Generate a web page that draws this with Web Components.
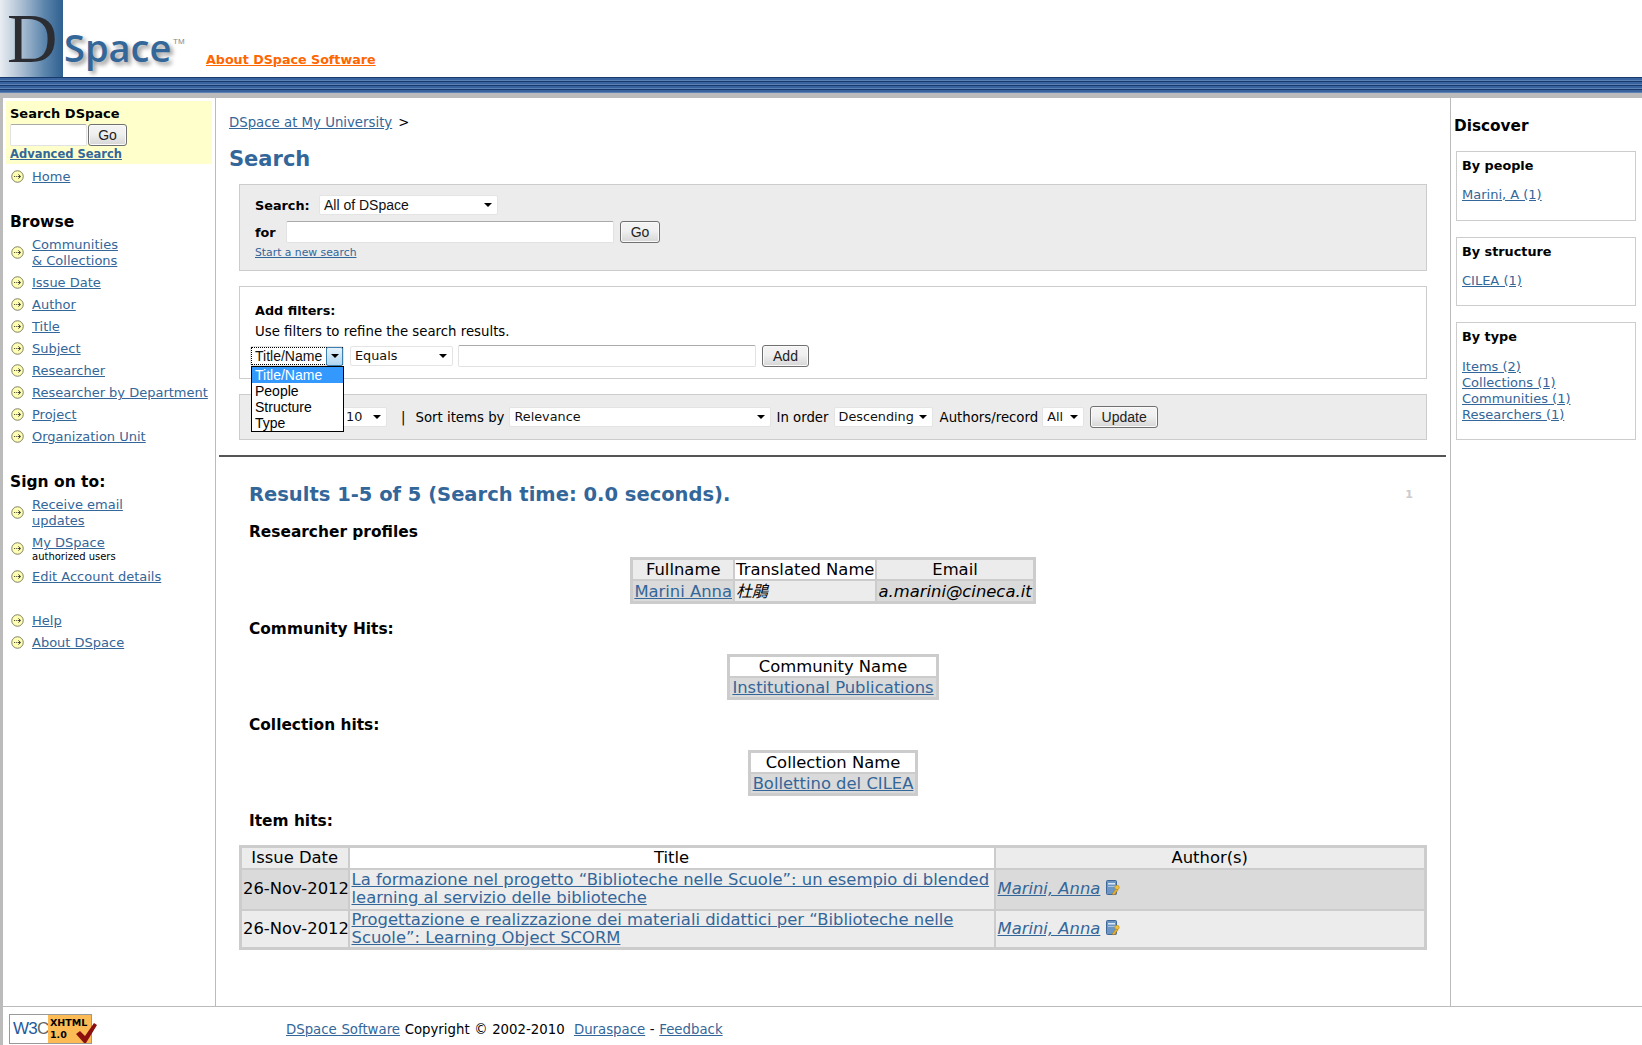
<!DOCTYPE html>
<html lang="en"><head><meta charset="utf-8"><title>DSpace Search</title>
<style>
html,body{margin:0;padding:0;background:#fff}
body{font-family:"DejaVu Sans",Verdana,sans-serif;font-size:13px;color:#000;overflow:hidden;height:1045px}
</style></head><body>
<ds-page>
  <ds-header slot="header"></ds-header>
  <ds-sidebar slot="left"></ds-sidebar>
  <ds-main slot="main"></ds-main>
  <ds-discover slot="right"></ds-discover>
  <ds-footer slot="footer"></ds-footer>
</ds-page>
<script>
const LINK='#336699';
const linkCss=`a{color:${LINK};text-decoration:underline}`;
function def(name,css,html){
  customElements.define(name,class extends HTMLElement{
    constructor(){super();const s=this.attachShadow({mode:'open'});
      s.innerHTML=`<style>${css}</style>${typeof html==='function'?html(this):html}`;}
  });
}
def('ds-page',`:host{display:flex;flex-direction:column;height:1045px;overflow:hidden}
.body{display:flex;height:908px;border-left:3px solid #bbb;flex:none}
::slotted([slot=left]){width:213px;flex:none;border-right:1px solid #bbb}
::slotted([slot=main]){flex:1;min-width:0}
::slotted([slot=right]){width:192px;flex:none;border-left:1px solid #bbb}`,
`<slot name="header"></slot><div class="body"><slot name="left"></slot><slot name="main"></slot><slot name="right"></slot></div><slot name="footer"></slot>`);

def('ds-header',`:host{display:block}
.top{height:77px;display:flex;align-items:flex-end;position:relative}
.logo{width:63px;height:77px;flex:none;background:linear-gradient(90deg,#e9edf2 0%,#a9bdd2 35%,#5d86ad 70%,#2f6090 100%);position:relative}
.d{position:absolute;left:7px;top:4px;font:70px/70px "Liberation Serif",serif;color:#2b2d33}
.space{flex:none;width:110px;box-sizing:border-box;padding-left:1px;font:600 38px/48px "Open Sans",sans-serif;color:#336699;text-shadow:3px 3px 4px #9a9a9a;margin-bottom:6px;white-space:nowrap}
.tm{flex:none;font:8px/10px "Liberation Sans",sans-serif;color:#888;align-self:flex-start;margin-top:37px;width:24px}
a{font:bold 12.7px/16px "DejaVu Sans",sans-serif;color:#ff6600;margin-left:9px;margin-bottom:9px;text-decoration:underline}
.st{height:16px;background:repeating-linear-gradient(180deg,#17396b 0 1px,#39639f 1px 3px,#5b82b5 3px 4px)}
.gr{height:5px;background:#bbb}`,
`<div class="top"><div class="logo"><span class="d">D</span></div><span class="space">Space</span><span class="tm">TM</span><a href="#">About DSpace Software</a></div><div class="st"></div><div class="gr"></div>`);

def('ds-btn',`:host{display:inline-block;box-sizing:border-box;height:22px;padding:0 9px;border:1px solid #707070;border-radius:3px;background:linear-gradient(#f4f4f4,#f0f0f0 45%,#d6d6d6);font:14px/20px "Liberation Sans",sans-serif;color:#222;text-align:center;box-shadow:inset 0 0 0 1px #fafafa;flex:none}`,`<slot></slot>`);
def('ds-input',`:host{display:inline-block;box-sizing:border-box;height:22px;background:#fff;border:1px solid #e2e2e2;border-top-color:#aaa;border-radius:2px;flex:none}`,``);
def('ds-sel',`:host{display:inline-flex;align-items:center;box-sizing:border-box;height:20px;background:#fff;border:1px solid #e4e4e4;border-radius:2px;padding:0 4px;font:14px/18px "Liberation Sans",sans-serif;color:#111;justify-content:space-between;flex:none}
:host([v]){font-family:"DejaVu Sans",sans-serif;font-size:12.8px}
:host([plain]) i{display:none}
i{width:0;height:0;border:4px solid transparent;border-top:4px solid #000;border-bottom:0;margin-right:1px}`,`<span><slot></slot></span><i></i>`);

const bullet=`<svg width="13" height="13" viewBox="0 0 14 14"><circle cx="7" cy="7" r="6.2" fill="#ffffb4" stroke="#77775a"/><path d="M3.2 7h1M5.2 7h1M7.2 7h2.5" stroke="#333"/><path d="M8 4.8 10.4 7 8 9.2" fill="none" stroke="#333"/></svg>`;
def('ds-nav',`:host{display:flex;align-items:center;gap:8px;padding:3px 0 3px 5px;line-height:16px;font-size:13px}
svg{flex:none;margin-top:-1px}
.c{display:block;min-width:0}
::slotted(a){color:${LINK}}`,`${bullet}<span class="c"><slot></slot></span>`);

def('ds-sidebar',`:host{display:block;box-sizing:border-box;padding:3px 3px 0}
${linkCss}
.sb{background:#ffffcc;height:63px;padding:5px 4px 0;box-sizing:border-box}
.t{font:bold 13px/16px "DejaVu Sans",sans-serif;color:#000}
.r{display:flex;gap:1px;height:22px;margin-top:2px}
.r ds-input{width:77px}.r ds-btn{width:39px;padding:0}
.adv{display:block;font:bold 11.5px/14px "DejaVu Sans",sans-serif;margin-top:1px}
h2{font:bold 15.5px/20px "DejaVu Sans",sans-serif;margin:0 0 2px 4px;color:#000}`,
`<div class="sb"><div class="t">Search DSpace</div><div class="r"><ds-input></ds-input><ds-btn>Go</ds-btn></div><a class="adv" href="#">Advanced Search</a></div>
<ds-nav style="margin-top:2px"><a href="#">Home</a></ds-nav>
<h2 style="margin-top:24px">Browse</h2>
<ds-nav><a href="#">Communities<br>&amp; Collections</a></ds-nav>
<ds-nav><a href="#">Issue Date</a></ds-nav>
<ds-nav><a href="#">Author</a></ds-nav>
<ds-nav><a href="#">Title</a></ds-nav>
<ds-nav><a href="#">Subject</a></ds-nav>
<ds-nav><a href="#">Researcher</a></ds-nav>
<ds-nav><a href="#">Researcher by Department</a></ds-nav>
<ds-nav><a href="#">Project</a></ds-nav>
<ds-nav><a href="#">Organization Unit</a></ds-nav>
<h2 style="margin-top:24px">Sign on to:</h2>
<ds-nav><a href="#">Receive email<br>updates</a></ds-nav>
<ds-nav><span><a href="#">My DSpace</a><small style="display:block;font-size:10px;line-height:12px">authorized users</small></span></ds-nav>
<ds-nav><a href="#">Edit Account details</a></ds-nav>
<div style="height:22px"></div>
<ds-nav><a href="#">Help</a></ds-nav>
<ds-nav><a href="#">About DSpace</a></ds-nav>`);

def('ds-panel',`:host{display:block;box-sizing:border-box;margin:0 0 0 23px;width:1188px;border:1px solid #ccc}
:host([g]){background:#ececec}`,`<slot></slot>`);

def('ds-key',`:host{display:inline-block;vertical-align:-2px;width:15px;height:16px}`,
`<svg width="15" height="16" viewBox="0 0 15 16"><rect x=".5" y=".5" width="10" height="14" rx="1" fill="#6d96c4" stroke="#3f6797"/><rect x="2" y="3" width="7" height="1.5" fill="#dbe7f3"/><rect x="2" y="6" width="7" height="1" fill="#a9c3de"/><circle cx="11" cy="7.5" r="2.2" fill="#f0c040" stroke="#b88a10" stroke-width=".6"/><path d="M10 9 6 14l2 1 4-5z" fill="#e8b030" stroke="#a87a10" stroke-width=".5"/></svg>`);

def('ds-main',`:host{display:block;box-sizing:border-box;position:relative;font-size:13.3px}
${linkCss}
.crumb{padding:17px 0 0 13px;line-height:16px}
h1{font:bold 21px/28px "DejaVu Sans",sans-serif;color:${LINK};margin:14px 0 11px 13px}
.lab{font:bold 12.8px/16px "DejaVu Sans",sans-serif}
.row{display:flex;align-items:center}
.row .lab{margin-top:2px}
.p1{height:87px;padding:10px 15px 0;box-sizing:border-box}
.p2{height:93px;margin-top:15px;padding:16px 15px 0;box-sizing:border-box}
.p3{height:46px;margin-top:15px;padding:11px 15px 0;box-sizing:border-box}
.small{font-size:10.8px;line-height:12px;display:block;margin-top:4px}
hr{border:0;border-top:2px solid #555;margin:15px 4px 0 3px;height:0}
.res{padding:25px 33px 0;position:relative}
h2{font:bold 19.5px/26px "DejaVu Sans",sans-serif;color:${LINK};margin:0}
h3{font:bold 15.4px/22px "DejaVu Sans",sans-serif;color:#000;margin:14px 0 0}
h2+h3{margin-top:13px}
.pg{position:absolute;right:37px;top:31px;font:bold 11px/14px "DejaVu Sans",sans-serif;color:#ccc}
table{border-collapse:collapse;border:3px solid #ccc;margin:14px auto 0;font:16.4px/19px "DejaVu Sans",sans-serif;color:#000}
th,td{border:2px solid #ccc;padding:0 2px;font-weight:400}
.tight th,.tight td{padding:0 1px}
.w{background:#fff}.g{background:#ececec}.d{background:#dadada}
.items{width:1188px;table-layout:fixed;margin:13px 0 0 -10px}
.items th{line-height:20px}
.items td{line-height:18px}
.items .r1 td{padding-top:1px;padding-bottom:2px}
.items .n{white-space:nowrap;padding:0 1px}
.items a.i{font-style:italic}
.dd{position:absolute;left:35px;top:268px;width:93px;box-sizing:border-box;height:66px;background:#fff;border:1px solid #000;font:14px/16px "Liberation Sans",sans-serif;z-index:3}
.dd div{padding-left:3px;height:16px}
.dd .on{background:#3399ff;color:#fff}
.focus{outline:1px dotted #000;outline-offset:-2px}
.arrowbox{flex:none;width:17px;height:19px;background:linear-gradient(#e6f2fb,#b0d6f0);border:1px solid #3c7fb1;border-radius:2px;margin-left:-18px;display:flex;align-items:center;justify-content:center;box-sizing:border-box}
.arrowbox i{width:0;height:0;border:4px solid transparent;border-top:4px solid #000;border-bottom:0}`,
`<div class="crumb"><a href="#">DSpace at My University</a><span style="margin-left:6px">&gt;</span></div>
<h1>Search</h1>
<ds-panel g class="p1">
  <div class="row"><span class="lab" style="width:64px">Search:</span><ds-sel style="width:179px">All of DSpace</ds-sel></div>
  <div class="row" style="margin-top:6px"><span class="lab" style="width:31px">for</span><ds-input style="width:328px"></ds-input><ds-btn style="width:40px;margin-left:6px;padding:0">Go</ds-btn></div>
  <a class="small" href="#">Start a new search</a>
</ds-panel>
<ds-panel class="p2">
  <div class="lab">Add filters:</div>
  <div style="line-height:16px;margin-top:5px">Use filters to refine the search results.</div>
  <div class="row" style="margin:5px 0 0 -5px">
    <ds-sel class="focus" plain style="width:94px;justify-content:flex-start">Title/Name</ds-sel><span class="arrowbox"><i></i></span>
    <ds-sel v style="width:103px;margin-left:7px">Equals</ds-sel>
    <ds-input style="width:298px;margin-left:5px"></ds-input>
    <ds-btn style="width:47px;margin-left:6px;padding:0">Add</ds-btn>
  </div>
</ds-panel>
<ds-panel g class="p3">
  <div class="row"><span style="width:82px;flex:none"></span>
    <ds-sel v style="width:50px;padding-left:8px">10</ds-sel>
    <span style="margin-left:14px">|</span><span style="margin-left:10px">Sort items by</span>
    <ds-sel v style="width:262px;margin-left:5px">Relevance</ds-sel>
    <span style="margin-left:5px">In order</span>
    <ds-sel v style="width:99px;margin-left:5px">Descending</ds-sel>
    <span style="margin-left:7px">Authors/record</span>
    <ds-sel v style="width:42px;margin-left:4px">All</ds-sel>
    <ds-btn style="width:68px;margin-left:6px;padding:0">Update</ds-btn>
  </div>
</ds-panel>
<div class="dd"><div class="on">Title/Name</div><div>People</div><div>Structure</div><div>Type</div></div>
<hr>
<div class="res">
<span class="pg">1</span>
<h2>Results 1-5 of 5 (Search time: 0.0 seconds).</h2>
<h3>Researcher profiles</h3>
<table class="tight"><tr><th class="g">Fullname</th><th class="w">Translated Name</th><th class="g">Email</th></tr>
<tr><td class="d"><a href="#">Marini Anna</a></td><td class="g"><i style="font-family:'Noto Sans CJK TC',sans-serif;font-size:16px;line-height:19px">杜鵑</i></td><td class="d"><i>a.marini@cineca.it</i></td></tr></table>
<h3>Community Hits:</h3>
<table><tr><th class="w">Community Name</th></tr><tr><td class="d"><a href="#">Institutional Publications</a></td></tr></table>
<h3>Collection hits:</h3>
<table><tr><th class="w">Collection Name</th></tr><tr><td class="d"><a href="#">Bollettino del CILEA</a></td></tr></table>
<h3>Item hits:</h3>
<table class="items">
<colgroup><col style="width:108px"><col style="width:646px"><col></colgroup>
<tr><th class="g">Issue Date</th><th class="w">Title</th><th class="g">Author(s)</th></tr>
<tr class="r1"><td class="d n">26-Nov-2012</td><td class="g"><a href="#">La formazione nel progetto “Biblioteche nelle Scuole”: un esempio di blended learning al servizio delle biblioteche</a></td><td class="d"><a class="i" href="#">Marini, Anna</a> <ds-key></ds-key></td></tr>
<tr><td class="g n">26-Nov-2012</td><td class="g"><a href="#">Progettazione e realizzazione dei materiali didattici per “Biblioteche nelle Scuole”: Learning Object SCORM</a></td><td class="g"><a class="i" href="#">Marini, Anna</a> <ds-key></ds-key></td></tr>
</table>
</div>`);

def('ds-box',`:host{display:block;box-sizing:border-box;margin:0 0 16px 5px;width:180px;border:1px solid #ccc;padding:6px 5px 0}
.t{font:bold 12.8px/16px "DejaVu Sans",sans-serif;color:#000}
.c{margin-top:var(--cm,13px);line-height:16px;font-size:13px}
::slotted(a){display:block;color:${LINK}}`,
t=>`<div class="t">${t.getAttribute('t')||''}</div><div class="c"><slot></slot></div>`);

def('ds-discover',`:host{display:block;box-sizing:border-box;padding-top:17px}
h2{font:bold 15.3px/22px "DejaVu Sans",sans-serif;margin:0 0 14px 3px;color:#000}`,
`<h2>Discover</h2>
<ds-box t="By people" style="height:70px"><a href="#">Marini, A (1)</a></ds-box>
<ds-box t="By structure" style="height:69px"><a href="#">CILEA (1)</a></ds-box>
<ds-box t="By type" style="height:118px;--cm:14px"><a href="#">Items (2)</a><a href="#">Collections (1)</a><a href="#">Communities (1)</a><a href="#">Researchers (1)</a></ds-box>`);

def('ds-footer',`:host{display:flex;align-items:center;height:39px;border-top:1px solid #bbb;border-left:3px solid #bbb;box-sizing:border-box;font-size:13.3px;padding-left:6px}
${linkCss}
.b{position:relative;width:83px;height:30px;border:1px solid #999;box-sizing:border-box;background:#fff;flex:none;display:flex;margin-top:6px;margin-right:1px}
.w3c{flex:none;width:38px;box-sizing:border-box;font:17px/28px "Liberation Sans",sans-serif;color:#1f5a9c;letter-spacing:-.8px;padding-left:3px;white-space:nowrap}
.w3c b{font-weight:400;color:#666}
.x{flex:1;background:#fdbb55;font:bold 9.5px/12px "DejaVu Sans",sans-serif;color:#000;padding:2px 0 0 2px;white-space:pre}
svg{position:absolute;right:-7px;top:7px}
.t{margin-left:193px;margin-top:6px;word-spacing:.4px}`,
`<span class="b"><span class="w3c">W3<b>C</b></span><span class="x">XHTML
1.0</span><svg width="24" height="22" viewBox="0 0 24 22"><path d="M2 12l4-3 5 5L20 1l3 2-11 18h-2z" fill="#8b0f0f"/></svg></span><span class="t"><a href="#">DSpace Software</a> Copyright © 2002-2010&nbsp; <a href="#">Duraspace</a> - <a href="#">Feedback</a></span>`);
</script>
</body></html>
